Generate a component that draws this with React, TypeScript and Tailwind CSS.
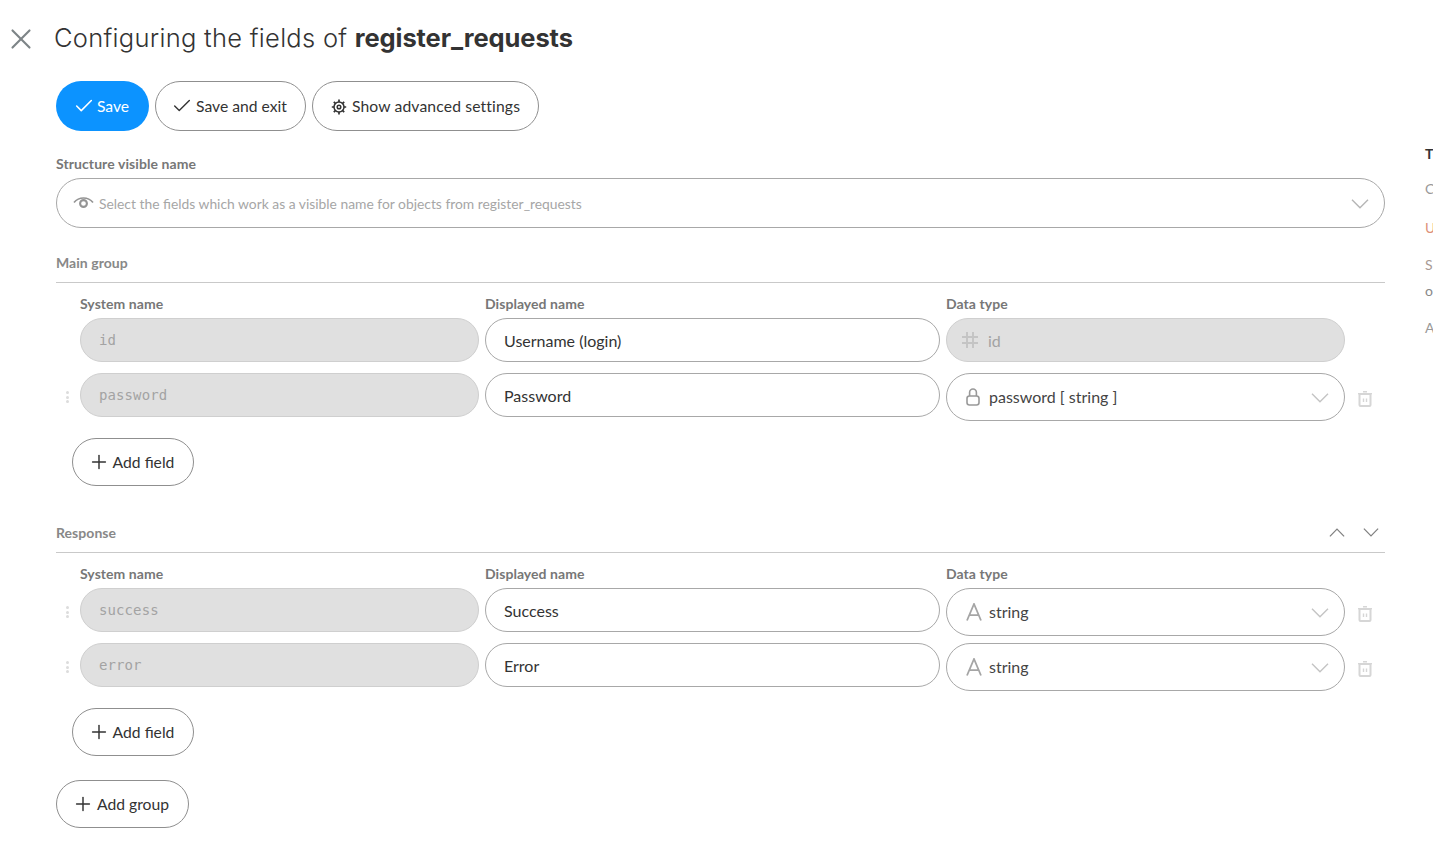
import { Check, Plus, X } from "lucide-react";
import type { ReactNode } from "react";

const mono = "font-['DejaVu_Sans_Mono','Liberation_Mono',monospace]";

function Chevron({ up = false, className = "h-[10px] w-[18px]" }: { up?: boolean; className?: string }) {
  return (
    <svg viewBox="0 0 18 10" preserveAspectRatio="none" className={className} fill="none" stroke="currentColor" strokeWidth="1.4">
      <path d={up ? "M1 9.3 9 1.3l8 8" : "M1 .7l8 8 8-8"} />
    </svg>
  );
}

function Gear() {
  return (
    <svg viewBox="0 0 16 16" className="h-4 w-4 text-[#333]" fill="none" stroke="currentColor">
      <circle cx="8" cy="8" r="5" strokeWidth="1.5" />
      <circle cx="8" cy="8" r="1.8" strokeWidth="1.5" />
      <path d="M8 .5v2.5M8 13v2.5M.8 8h2.4M12.8 8h2.4M2.8 2.8l1.8 1.8M11.4 11.4l1.8 1.8M13.2 2.8l-1.8 1.8M4.6 11.4l-1.8 1.8" strokeWidth="1.7" />
    </svg>
  );
}

function EyeIcon() {
  return (
    <svg viewBox="0 0 21 13" className="h-[13px] w-[21px] text-[#949494]" fill="none" stroke="currentColor">
      <path d="M1 5.5C3.5 2.5 6.8 1 10.5 1s7 1.5 9.5 4.5" strokeWidth="1.7" />
      <circle cx="10.5" cy="6.5" r="3.4" strokeWidth="2.1" />
    </svg>
  );
}

function LockIcon() {
  return (
    <svg viewBox="0 0 14 18" className="h-[18px] w-[14px] text-[#999]" fill="none" stroke="currentColor" strokeWidth="1.6">
      <rect x="1" y="8" width="12" height="9" rx="2.5" />
      <path d="M3.6 8V4.4a3.4 3.4 0 0 1 6.8 0V8" />
    </svg>
  );
}

function LetterIcon() {
  return (
    <svg viewBox="0 0 16 18" className="h-[18px] w-4 text-[#a5a5a5]" fill="none" stroke="currentColor" strokeWidth="1.8">
      <path d="M1 17.5 8 1l7 16.5M3.4 12.2h9.2" />
    </svg>
  );
}

function HashIcon() {
  return (
    <svg viewBox="0 0 16 16" className="h-4 w-4 text-[#c4c4c4]" fill="none" stroke="currentColor" strokeWidth="1.9">
      <path d="M5 0v16M11 0v16M0 5h16M0 11h16" />
    </svg>
  );
}

function TrashIcon() {
  return (
    <svg viewBox="0 0 14 16" className="absolute top-[18px] left-[1278px] h-4 w-[14px] text-[#d6d6d6]" fill="none" stroke="currentColor">
      <path d="M0 2.8h14M5 .7h4" strokeWidth="1.5" />
      <rect x="1.5" y="3" width="11" height="12" rx="1" strokeWidth="2" />
      <path d="M5.5 7.5v3.5M8.5 7.5v3.5" strokeWidth="1.4" />
    </svg>
  );
}

function PillButton({ icon, label, className = "" }: { icon: ReactNode; label: string; className?: string }) {
  return (
    <button className={`flex h-12 items-center justify-center rounded-full border border-[#8f8f8f] bg-white pt-[2px] text-[15.7px] text-[#333] ${className}`}>
      {icon}
      {label}
    </button>
  );
}

function AddButton({ label, className = "" }: { label: string; className?: string }) {
  return <PillButton className={`gap-[7px] ${className}`} icon={<Plus className="-mx-[4px] -mt-[2px] h-[22px] w-[22px]" strokeWidth={1.6} />} label={label} />;
}

function HeaderRow() {
  return (
    <div className="ml-6 grid h-[35px] grid-cols-[399px_455px_399px] items-center gap-x-1.5 pt-[5px] text-[14px] font-bold tracking-[0.05px] text-[#777]">
      <span>System name</span>
      <span>Displayed name</span>
      <span>Data type</span>
    </div>
  );
}

function FieldRow({ name, shown, type, lock = false, className = "" }: { name: string; shown: string; type: string; lock?: boolean; className?: string }) {
  return (
    <div className={`relative ml-6 grid grid-cols-[399px_455px_399px] items-start gap-x-1.5 ${className}`}>
      <span className="absolute top-[18px] -left-[14px] flex flex-col gap-[1.5px]">
        <i className="h-[3px] w-[3px] rounded-full bg-[#dcdcdc]" />
        <i className="h-[3px] w-[3px] rounded-full bg-[#dcdcdc]" />
        <i className="h-[3px] w-[3px] rounded-full bg-[#dcdcdc]" />
      </span>
      <div className={`flex h-11 items-center rounded-full border border-[#cfcfcf] bg-[#e0e0e0] pl-[18px] text-[14px] tracking-[0.1px] text-[#a3a3a3] ${mono}`}>{name}</div>
      <div className="flex h-11 items-center rounded-full border border-[#a8a8a8] bg-white pt-[2px] pl-[18px] text-[16px] text-[#333]">{shown}</div>
      <div className="flex h-12 items-center rounded-full border border-[#a8a8a8] bg-white pr-[15px] pl-[19px] text-[16px] text-[#444]">
        {lock ? <LockIcon /> : <LetterIcon />}
        <span className={lock ? "ml-[9px]" : "ml-[7px]"}>{type}</span>
        <Chevron className="mt-[2px] ml-auto h-[10px] w-[18px] text-[#c4c4c4]" />
      </div>
      <TrashIcon />
    </div>
  );
}

export default function App() {
  return (
    <div className="flex h-[868px] w-full overflow-hidden bg-white font-['Lato','Open_Sans',sans-serif]">
      <div className="w-[1425px] shrink-0">
        <div className="flex h-[77px] items-center pl-[4px]">
          <X className="h-[34px] w-[34px] text-[#7d8487]" strokeWidth={1.5} />
          <h1 className="ml-[16px] font-['Inter',sans-serif] text-[25.5px] font-light tracking-[0.28px] text-[#333]">
            Configuring the fields of <b className="font-bold tracking-[-0.1px]">register_requests</b>
          </h1>
        </div>

        <div className="ml-14 w-[1329px] pt-1">
          <div className="flex h-[50px] gap-1.5">
            <button className="flex h-[50px] w-[93px] items-center justify-center gap-[5px] rounded-full bg-[#0c93ff] pt-[2px] text-[15.7px] text-white">
              <Check className="-mx-[3px] -mt-[2px] h-[22px] w-[22px]" strokeWidth={1.7} />
              Save
            </button>
            <PillButton className="h-[50px] w-[151px] gap-[6px] text-[15.5px]" icon={<Check className="-mx-[3px] -mt-[2px] h-[22px] w-[22px]" strokeWidth={1.5} />} label="Save and exit" />
            <PillButton className="h-[50px] w-[227px] gap-[5px] tracking-[0.14px]" icon={<Gear />} label="Show advanced settings" />
          </div>

          <div className="mt-[24px] text-[14px] leading-[18px] font-bold tracking-[0.08px] text-[#777]">Structure visible name</div>
          <div className="mt-[5px] flex h-[50px] items-center rounded-full border border-[#a8a8a8] pr-[15px] pl-[16px] text-[13.85px] text-[#a6a6a6]">
            <EyeIcon />
            <span className="ml-[5px] pt-[2px]">Select the fields which work as a visible name for objects from register_requests</span>
            <Chevron className="mt-[2px] ml-auto h-[10px] w-[18px] text-[#b5b5b5]" />
          </div>

          <div className="mt-[25px] flex h-[19px] items-center text-[14px] font-bold tracking-[0.05px] text-[#888]">Main group</div>
          <div className="mt-[10px] border-t border-[#c9c9c9]" />
          <HeaderRow />

          <div className="ml-6 grid grid-cols-[399px_455px_399px] gap-x-1.5">
            <div className={`flex h-11 items-center rounded-full border border-[#cfcfcf] bg-[#e0e0e0] pl-[18px] text-[14px] tracking-[0.1px] text-[#a3a3a3] ${mono}`}>id</div>
            <div className="flex h-11 items-center rounded-full border border-[#a8a8a8] bg-white pt-[2px] pl-[18px] text-[16px] text-[#333]">Username (login)</div>
            <div className="flex h-11 items-center rounded-full border border-[#cfcfcf] bg-[#e0e0e0] pl-[15px] text-[16px] text-[#a3a3a3]">
              <HashIcon />
              <span className="ml-[10px] pt-[2px]">id</span>
            </div>
          </div>
          <FieldRow className="mt-[11px]" name="password" shown="Password" type="password [ string ]" lock />

          <AddButton className="mt-[17px] ml-4 w-[122px]" label="Add field" />

          <div className="mt-[37px] flex h-[19px] items-center justify-between text-[14px] font-bold tracking-[0.05px] text-[#888]">
            Response
            <span className="mr-[6px] flex gap-[18px]">
              <Chevron up className="h-[9px] w-4 text-[#808080]" />
              <Chevron className="h-[9px] w-4 text-[#808080]" />
            </span>
          </div>
          <div className="mt-[10px] border-t border-[#c9c9c9]" />
          <HeaderRow />
          <FieldRow name="success" shown="Success" type="string" />
          <FieldRow className="mt-[7px]" name="error" shown="Error" type="string" />

          <AddButton className="mt-[17px] ml-4 w-[122px]" label="Add field" />
          <AddButton className="mt-6 w-[133px]" label="Add group" />
        </div>
      </div>

      <div className="pt-[143px] text-[14px] whitespace-nowrap">
        <div className="font-bold text-[#333]">T</div>
        <div className="mt-[14px] text-[#999]">C</div>
        <div className="mt-[18px] text-[#dd9078]">U</div>
        <div className="mt-[16px] text-[#a89a94]">S</div>
        <div className="mt-[5px] text-[#888]">o</div>
        <div className="mt-[16px] text-[#999]">A</div>
      </div>
    </div>
  );
}
